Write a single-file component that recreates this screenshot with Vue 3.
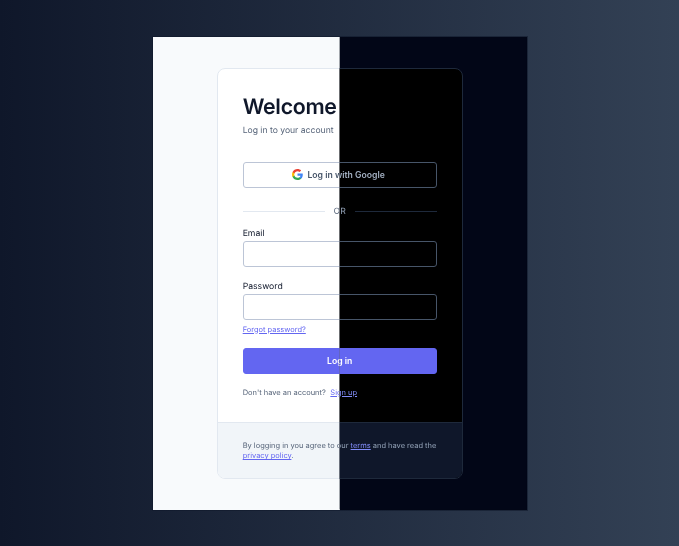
<script setup>
const themes = ['light', 'dark']
</script>

<template>
  <main class="page">
    <section class="frame">
      <div v-for="theme in themes" :key="theme" class="panel" :class="theme">
        <article class="card">
          <div class="body">
            <h1 class="title">Welcome</h1>
            <p class="subtitle">Log in to your account</p>
            <button class="btn google" type="button">
              <svg class="g" viewBox="0 0 24 24" width="11" height="11">
                <path fill="#4285F4" d="M23.5 12.3c0-.8-.1-1.6-.2-2.3H12v4.500h6.500c-.3 1.500-1.100 2.700-2.400 3.600v3h3.900c2.200-2.100 3.500-5.100 3.500-8.800z"/>
                <path fill="#34A853" d="M12 24c3.200 0 6-1.100 8-2.900l-3.900-3c-1.100.7-2.500 1.200-4.100 1.200-3.100 0-5.800-2.100-6.700-5H1.300v3.100C3.300 21.300 7.300 24 12 24z"/>
                <path fill="#FBBC05" d="M5.300 14.300c-.5-1.500-.5-3.100 0-4.600V6.600h-4C-.4 10-.4 14 1.300 17.400l4-3.100z"/>
                <path fill="#EA4335" d="M12 4.800c1.800 0 3.300.6 4.600 1.800l3.400-3.400C17.900 1.200 15.200 0 12 0 7.300 0 3.300 2.700 1.300 6.600l4 3.100c.9-2.800 3.600-4.900 6.700-4.900z"/>
              </svg>
              <span>Log in with Google</span>
            </button>
            <div class="divider"><span>OR</span></div>
            <label class="field">
              <span class="label">Email</span>
              <span class="input"></span>
            </label>
            <label class="field second">
              <span class="label">Password</span>
              <span class="input"></span>
            </label>
            <a class="link forgot">Forgot password?</a>
            <button class="btn primary" type="button">Log in</button>
            <p class="signup">Don't have an account? <a class="link">Sign up</a></p>
          </div>
          <footer class="foot">
            By logging in you agree to our <a class="link">terms</a> and have read the
            <a class="link">privacy policy</a>.
          </footer>
        </article>
      </div>
    </section>
  </main>
</template>

<style>
html, body { margin: 0; }
</style>

<style scoped>
.page {
  width: 679px;
  height: 546px;
  overflow: hidden;
  display: flex;
  align-items: center;
  justify-content: center;
  background: linear-gradient(90deg, #0f172a 0%, #334155 100%);
  font-family: Inter, "Liberation Sans", sans-serif;
  text-rendering: geometricPrecision;
}
.frame {
  position: relative;
  width: 374px;
  height: 473px;
  margin-left: 0.34px;
  background: linear-gradient(90deg, #f8fafc 50%, #020617 50%);
  box-shadow: 0 0 0 1px rgba(15, 23, 42, 0.55);
}
.panel {
  width: 100%;
  height: 100%;
  box-sizing: border-box;
  padding: 31px 64px;
}
.panel.light { clip-path: inset(0 50% 0 0); }
.panel.dark {
  position: absolute;
  inset: 0;
  clip-path: inset(0 0 0 50%);
}
.light {
  --bg: #f8fafc;
  --card: #ffffff;
  --card-border: #e2e8f0;
  --foot: #f1f5f9;
  --title: #0f172a;
  --text: #566479;
  --strong: #475569;
  --label: #0f172a;
  --border: #bcc5d6;
  --rule: #e2e8f0;
  --link: #6366f1;
  background: var(--bg);
}
.dark {
  --bg: #020617;
  --card: #000000;
  --card-border: #1e293b;
  --foot: #0f172a;
  --title: #f8fafc;
  --text: #94a3b8;
  --strong: #a3b0c2;
  --label: #e2e8f0;
  --border: #475569;
  --rule: #1e293b;
  --link: #818cf8;
  background: var(--bg);
}
.card {
  height: 411px;
  box-sizing: border-box;
  display: flex;
  flex-direction: column;
  background: var(--card);
  border: 1px solid var(--card-border);
  border-radius: 8px;
  overflow: hidden;
  filter: blur(0.2px);
}
.body {
  flex: 1;
  padding: 25px 25px 0;
  display: flex;
  flex-direction: column;
  align-items: stretch;
}
.title {
  margin: 0;
  font-size: 21.330px;
  line-height: 27px;
  font-weight: 600;
  letter-spacing: -0.3px;
  color: var(--title);
}
.subtitle {
  margin: 3px 0 0;
  font-size: 8.600px;
  line-height: 14px;
  color: var(--text);
}
.btn {
  height: 26px;
  box-sizing: border-box;
  border-radius: 3px;
  font-family: inherit;
  font-size: 8.670px;
  font-weight: 500;
  padding: 0;
}
.google {
  margin-top: 24px;
  padding-right: 2px;
  display: flex;
  align-items: center;
  justify-content: center;
  gap: 4px;
  background: transparent;
  border: 1px solid var(--border);
  color: var(--strong);
  font-weight: 600;
}
.g { display: block; }
.divider {
  margin-top: 18px;
  height: 12px;
  display: flex;
  align-items: center;
  gap: 9px;
  font-size: 8.670px;
  color: var(--text);
}
.divider::before,
.divider::after {
  content: "";
  flex: 1;
  height: 1px;
  background: var(--rule);
}
.field {
  display: flex;
  flex-direction: column;
  margin-top: 9px;
}
.field.second { margin-top: 13px; }
.label {
  font-size: 8.670px;
  line-height: 14px;
  font-weight: 400;
  color: var(--label);
}
.input {
  height: 26px;
  box-sizing: border-box;
  border: 1px solid var(--border);
  border-radius: 3px;
}
.link {
  color: var(--link);
  text-decoration: underline;
}
.forgot {
  margin-top: 3px;
  font-size: 7.470px;
  line-height: 14px;
  align-self: flex-start;
}
.primary {
  margin-top: 11px;
  border: 1px solid #6366f1;
  background: #6366f1;
  color: #ffffff;
  font-weight: 600;
}
.signup {
  margin: 12px 0 0;
  font-size: 7.470px;
  line-height: 14px;
  color: var(--text);
}
.signup .link { margin-left: 2.500px; }
.foot {
  flex: none;
  height: 56px;
  box-sizing: border-box;
  padding: 18px 25px 0;
  background: var(--foot);
  border-top: 1px solid var(--card-border);
  font-size: 7.470px;
  line-height: 10.670px;
  color: var(--text);
}
</style>
